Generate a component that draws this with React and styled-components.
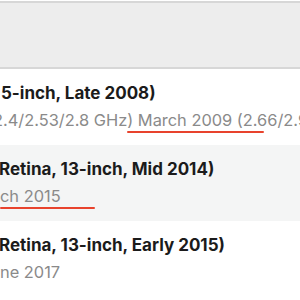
import React from 'react';
import styled, { createGlobalStyle } from 'styled-components';

const Global = createGlobalStyle`
  html, body {
    margin: 0;
    padding: 0;
    background: #fff;
    overflow: hidden;
  }
  body {
    font-family: Inter, 'Noto Sans', 'Liberation Sans', sans-serif;
    -webkit-font-smoothing: antialiased;
  }
`;

const Page = styled.div`
  width: 300px;
  height: 300px;
  overflow: hidden;
  display: flex;
  flex-direction: column;
`;

const Toolbar = styled.div`
  height: 64px;
  flex: none;
  margin-top: 1px;
  background: #ededed;
  border-top: 2px solid #d7d7d7;
  border-bottom: 2px solid #d7d7d7;
`;

const Row = styled.div`
  position: relative;
  height: 76px;
  flex: none;
  overflow: hidden;
  background: ${(p) => (p.$alt ? '#f4f5f5' : '#fff')};
  display: flex;
  flex-direction: column;
`;

const Title = styled.div`
  font-size: 17px;
  font-weight: 700;
  color: #1b1b1b;
  white-space: nowrap;
  line-height: 20px;
  margin-top: 14px;
  margin-left: ${(p) => p.$shift}px;
`;

const Sub = styled.div`
  font-size: 16.4px;
  font-weight: 400;
  color: #8a8a8a;
  white-space: nowrap;
  line-height: 20px;
  margin-top: 7px;
  margin-left: ${(p) => p.$shift}px;
`;

const Mark = styled.div`
  position: absolute;
  height: 2px;
  border-radius: 1px;
  background: #e8432d;
  top: 62px;
  left: ${(p) => p.$left}px;
  width: ${(p) => p.$width}px;
`;

const models = [
  {
    title: '5-inch, Late 2008)',
    titleShift: 1,
    sub: '(2.4/2.53/2.8 GHz) March 2009 (2.66/2.93 GHz)',
    subShift: -13,
    mark: { left: 127, width: 137 },
  },
  {
    title: 'Retina, 13-inch, Mid 2014)',
    titleShift: -1,
    sub: 'ch 2015',
    subShift: 0,
    mark: { left: 0, width: 95 },
    alt: true,
  },
  {
    title: 'Retina, 13-inch, Early 2015)',
    titleShift: -1,
    sub: 'ne 2017',
    subShift: 0,
  },
];

export default function App() {
  return (
    <Page>
      <Global />
      <Toolbar />
      {models.map((m) => (
        <Row key={m.title} $alt={m.alt}>
          <Title $shift={m.titleShift}>{m.title}</Title>
          <Sub $shift={m.subShift}>{m.sub}</Sub>
          {m.mark && <Mark $left={m.mark.left} $width={m.mark.width} />}
        </Row>
      ))}
    </Page>
  );
}
